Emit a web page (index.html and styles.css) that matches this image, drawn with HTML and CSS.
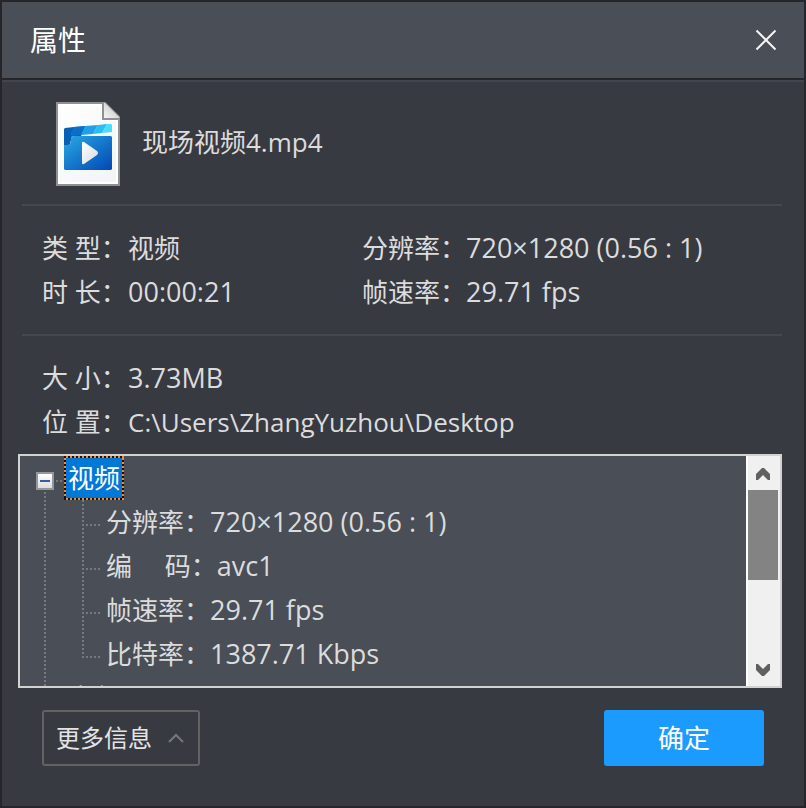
FILE: index.html
```html
<!DOCTYPE html>
<html lang="zh-CN">
<head>
<meta charset="utf-8">
<meta name="viewport" content="width=device-width, initial-scale=1">
<title>属性</title>
<link rel="stylesheet" href="styles.css">
</head>
<body>
<main class="dialog">
  <header class="titlebar">
    <h1 class="title">属性</h1>
    <button class="close" type="button" aria-label="关闭">
      <svg width="22" height="22" viewBox="0 0 22 22" fill="none" stroke="#f4f4f5" stroke-width="2"><path d="M1.5 1.5l19 19M20.5 1.5l-19 19"/></svg>
    </button>
  </header>

  <section class="file">
    <svg class="file-icon" width="64" height="84" viewBox="0 0 64 84" aria-hidden="true">
      <defs>
        <linearGradient id="paper" x1="0" y1="0" x2="1" y2="1"><stop offset="0" stop-color="#ffffff"/><stop offset="1" stop-color="#f1f3f5"/></linearGradient>
        <linearGradient id="body" x1="0" y1="0" x2="1" y2="1"><stop offset="0" stop-color="#2aaae2"/><stop offset=".5" stop-color="#1478cc"/><stop offset="1" stop-color="#0248b4"/></linearGradient>
        <linearGradient id="play" x1="0" y1="0" x2="1" y2="1"><stop offset="0" stop-color="#ffffff"/><stop offset="1" stop-color="#d8dade"/></linearGradient>
        <linearGradient id="fold" x1="0" y1="1" x2="1" y2="0"><stop offset="0" stop-color="#f8f8f8"/><stop offset="1" stop-color="#bfc0c2"/></linearGradient>
      </defs>
      <path d="M1 1H49L63 15V83H1Z" fill="url(#paper)" stroke="#8f9092" stroke-width="2"/>
      <path d="M3 3H46V18H61V81H3Z" fill="none" stroke="#ffffff" stroke-width="2"/>
      <path d="M47 1H49L63 15V17H47Z" fill="url(#fold)"/>
      <path d="M47 0V17H64" fill="none" stroke="#8f9092" stroke-width="2"/>
      <path d="M8 27L9 26L18 25L30 24L25 34H16L14 42L8 46Z" fill="#0560b6"/>
      <path d="M18 25L30 24L25 33L16 34L14 32Z" fill="#0a6fc8"/>
      <path d="M29 24L42 23L37 32L25 33Z" fill="#20a0e8"/>
      <path d="M42 23L51 22L46 31L37 32Z" fill="#29bdf2"/>
      <path d="M51 22H55L56 23V30L46 31Z" fill="#45dcfd"/>
      <path d="M17 34H55L56 35V67L55 68H9L8 67V43H12Q15 42 15 38Q15 34 17 34Z" fill="url(#body)"/>
      <path d="M26 42L42 52L26 63Z" fill="#0a4d96" opacity=".5"/>
      <path d="M26 41Q26 39 28 40L41 49Q43 51 41 53L28 62Q26 63 26 61Z" fill="url(#play)"/>
    </svg>
    <span class="file-name">现场视频4.mp4</span>
  </section>

  <dl class="facts two-up">
    <div class="fact"><dt>类 型：</dt><dd>视频</dd></div>
    <div class="fact"><dt>分辨率：</dt><dd class="figure">720×1280 (0.56 : 1)</dd></div>
    <div class="fact"><dt>时 长：</dt><dd class="figure">00:00:21</dd></div>
    <div class="fact"><dt>帧速率：</dt><dd class="figure">29.71 fps</dd></div>
  </dl>

  <dl class="facts">
    <div class="fact"><dt>大 小：</dt><dd class="figure">3.73MB</dd></div>
    <div class="fact"><dt>位 置：</dt><dd>C:\Users\ZhangYuzhou\Desktop</dd></div>
  </dl>

  <div class="details">
    <ul class="tree" role="tree">
      <li role="treeitem" aria-expanded="true" aria-selected="true">
        <div class="node">
          <button class="toggle" type="button" aria-label="折叠"></button>
          <span class="node-name selected">视频</span>
        </div>
        <ul class="leaves" role="group">
          <li class="leaf" role="treeitem">分辨率：<span class="figure">720×1280 (0.56 : 1)</span></li>
          <li class="leaf" role="treeitem">编　 码：<span class="figure">avc1</span></li>
          <li class="leaf" role="treeitem">帧速率：<span class="figure">29.71 fps</span></li>
          <li class="leaf" role="treeitem">比特率：<span class="figure">1387.71 Kbps</span></li>
        </ul>
      </li>
      <li role="treeitem" aria-expanded="false">
        <div class="node">
          <button class="toggle" type="button" aria-label="展开"></button>
          <span class="node-name">音频</span>
        </div>
      </li>
    </ul>
    <div class="scrollbar">
      <button class="arrow" type="button" aria-label="向上滚动">
        <svg width="14" height="12" viewBox="0 0 14 12" fill="#606060"><path d="M0 6L6 0H8L14 6V12H12L7 7L2 12H0Z"/></svg>
      </button>
      <div class="track"><div class="thumb"></div></div>
      <button class="arrow" type="button" aria-label="向下滚动">
        <svg width="14" height="12" viewBox="0 0 14 12" fill="#606060"><path d="M0 6L6 12H8L14 6V0H12L7 5L2 0H0Z"/></svg>
      </button>
    </div>
  </div>

  <footer class="actions">
    <button class="more" type="button">更多信息
      <svg width="16" height="10" viewBox="0 0 16 10" fill="none" stroke="#777779" stroke-width="2"><path d="M1 9L8 2L15 9"/></svg>
    </button>
    <button class="ok" type="button">确定</button>
  </footer>
</main>
</body>
</html>
```
FILE: styles.css
```css
* {
  box-sizing: border-box;
}

body,
h1,
dl,
dd,
ul {
  margin: 0;
  padding: 0;
}

ul {
  list-style: none;
}

body {
  --dots: #77797d;
  background: #383a42;
  color: #dcdcdc;
  font: 26px/44px "Open Sans", "Noto Sans CJK SC", sans-serif;
}

button {
  display: flex;
  align-items: center;
  justify-content: center;
  padding: 0;
  border: 0;
  background: none;
  color: inherit;
  font: inherit;
}

svg {
  flex: none;
}

.dialog {
  display: flex;
  flex-direction: column;
  height: 100vh;
  border: 2px solid #25252a;
}

.titlebar {
  display: flex;
  flex: none;
  align-items: center;
  justify-content: space-between;
  height: 78px;
  padding: 0 16px 0 28px;
  border-bottom: 2px solid #25252a;
  background: #4a4e57;
  box-shadow: 0 2px #42454e;
}

.title {
  color: #fff;
  font-size: 28px;
  font-weight: 400;
}

.close {
  width: 44px;
  height: 44px;
}

.file {
  display: flex;
  align-items: center;
  gap: 22px;
  height: 124px;
  margin: 0 22px 0 20px;
  padding: 4px 0 0 34px;
}

.file-name {
  padding-bottom: 4px;
}

.facts {
  margin: 0 22px 0 20px;
  padding: 20px;
  border-top: 2px solid #464850;
}

.facts:last-of-type {
  padding-bottom: 10px;
}

.two-up {
  display: grid;
  grid-template-columns: 320px 1fr;
}

.fact {
  display: flex;
  white-space: pre;
}

.fact dt {
  min-width: 86px;
}

.figure {
  font-size: 27px;
}

.details {
  display: flex;
  flex: 1;
  min-height: 0;
  margin: 0 22px 0 16px;
  border: 2px solid #d2d2d2;
  background: #4a4e57;
}

.tree {
  flex: 1;
  overflow: hidden;
  padding-left: 16px;
  background: repeating-linear-gradient(var(--dots) 0 2px, transparent 2px 4px) 24px 36px / 2px 100% no-repeat;
}

.node {
  display: flex;
  align-items: center;
  gap: 10px;
  height: 44px;
  background: repeating-linear-gradient(90deg, var(--dots) 0 2px, transparent 2px 4px) 20px 24px / 6px 2px no-repeat;
}

.toggle {
  width: 18px;
  height: 18px;
  margin-top: 6px;
  border: 2px solid #96979a;
  background:
    linear-gradient(#3c5aaa, #3c5aaa) center / 10px 2px no-repeat,
    linear-gradient(#fff, #dedede);
}

.node-name {
  padding: 0 4px;
}

.selected {
  --across: repeating-linear-gradient(90deg, #111 0 2px, #ff8728 2px 4px);
  --down: repeating-linear-gradient(#111 0 2px, #ff8728 2px 4px);
  background:
    var(--across) top / 100% 2px no-repeat,
    var(--across) bottom / 100% 2px no-repeat,
    var(--down) left / 2px 100% no-repeat,
    var(--down) right / 2px 100% no-repeat,
    #0078d7;
  color: #fff;
}

.leaves {
  padding-left: 46px;
}

.leaf {
  height: 44px;
  padding-left: 24px;
  background:
    repeating-linear-gradient(90deg, var(--dots) 0 2px, transparent 2px 4px) 0 24px / 18px 2px no-repeat,
    repeating-linear-gradient(var(--dots) 0 2px, transparent 2px 4px) 0 0 / 2px 44px no-repeat;
  white-space: pre;
}

.leaf:last-child {
  background-size: 18px 2px, 2px 26px;
}

.scrollbar {
  display: flex;
  flex-direction: column;
  width: 34px;
  padding-right: 2px;
  border-left: 2px solid #fff;
  background: #f0f0f0;
}

.arrow {
  width: 100%;
  height: 34px;
  padding-top: 2px;
}

.track {
  flex: 1;
}

.thumb {
  height: 90px;
  background: #838383;
}

.actions {
  display: flex;
  flex: none;
  justify-content: space-between;
  padding: 22px 40px 40px;
}

.more,
.ok {
  height: 56px;
  border-radius: 3px;
}

.more {
  gap: 16px;
  padding: 0 14px 0 12px;
  border: 2px solid #626262;
  color: #e4e4e4;
  font-size: 24px;
}

.ok {
  width: 160px;
  background: #1c9bff;
  color: #fff;
}
```
